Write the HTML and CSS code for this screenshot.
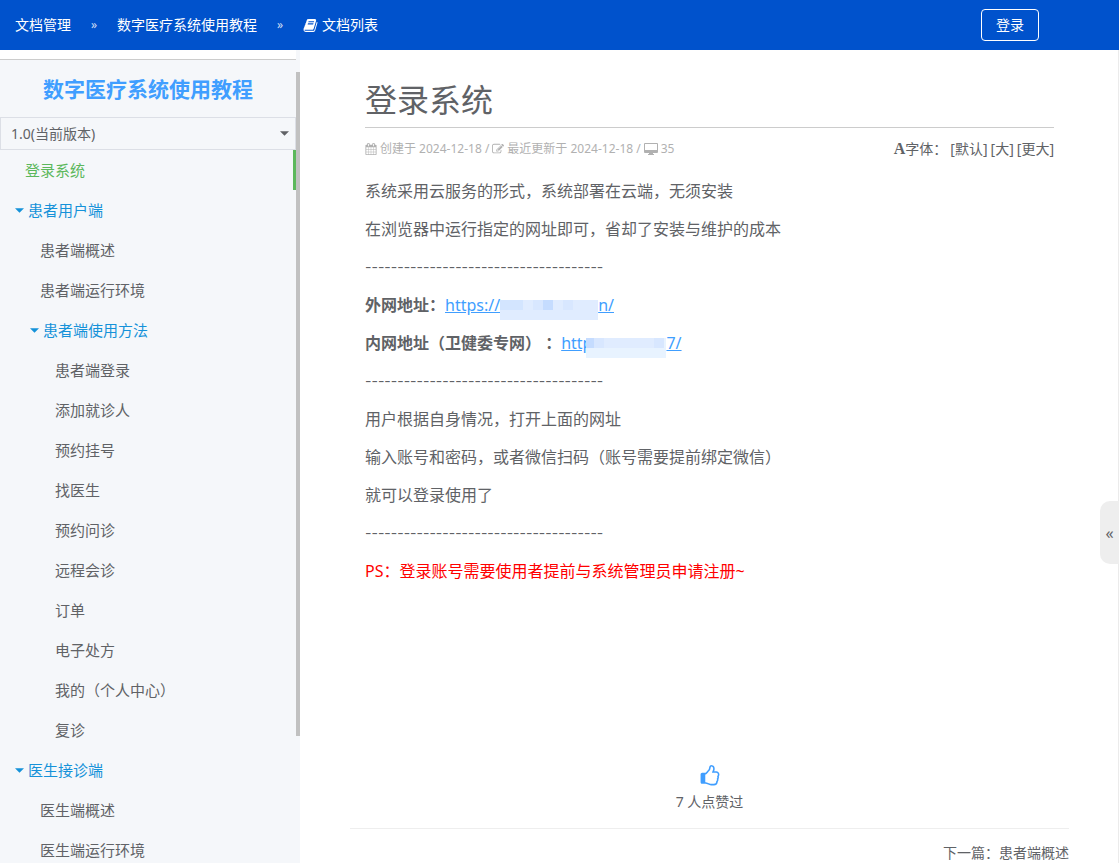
FILE: index.html
```html
<!DOCTYPE html>
<html lang="zh-CN">
<head>
<meta charset="utf-8">
<title>登录系统 - 数字医疗系统使用教程</title>
<link rel="stylesheet" href="styles.css">
</head>
<body>
<header class="topbar">
  <nav class="crumbs" aria-label="导航">
    <a href="#">文档管理</a>
    <span class="sep">»</span>
    <a href="#">数字医疗系统使用教程</a>
    <span class="sep">»</span>
    <a href="#" class="with-icon"><svg class="icon-book" viewBox="0 0 1792 1792" aria-hidden="true"><path d="M1703 478q40 57 18 129l-275 906q-19 64-76.500 107.500t-122.500 43.500h-923q-77 0-148.500-53.500t-99.500-131.500q-24-67-2-127 0-4 3-27t4-37q1-8-3-21.500t-3-19.500q2-11 8-21t16.500-23.500 16.500-23.500q23-38 45-91.500t30-91.500q3-10 .5-30t-.5-28q3-11 17-28t17-23q21-36 42-92t25-90q1-9-2.500-32t.5-28q4-13 22-30.500t22-22.500q19-26 42.500-84.500t27.500-96.500q1-8-3-25.500t-2-26.500q2-8 9-18t18-23 17-21q8-12 16.500-30.500t15-35 16-36 19.500-32 26.500-23.500 36-11.500 47.500 5.500l-1 3q38-9 51-9h761q74 0 114 56t18 130l-274 906q-36 119-71.500 153.500t-128.500 34.500h-869q-27 0-38 15-11 16-1 43 24 70 144 70h923q29 0 56-15.500t35-41.500l300-987q7-22 5-57 38 15 59 43zm-1064 2q-4 13 2 22.500t20 9.500h608q13 0 25.500-9.500t16.500-22.500l21-64q4-13-2-22.500t-20-9.500h-608q-13 0-25.500 9.500t-16.500 22.500zm-83 256q-4 13 2 22.500t20 9.500h608q13 0 25.500-9.500t16.500-22.500l21-64q4-13-2-22.500t-20-9.500h-608q-13 0-25.500 9.500t-16.500 22.500z"/></svg>文档列表</a>
  </nav>
  <button class="login" type="button">登录</button>
</header>
<div class="layout">
  <aside class="sidebar">
    <div class="side-main">
      <h2 class="book-title">数字医疗系统使用教程</h2>
      <div class="version">
        <select aria-label="版本"><option>1.0(当前版本)</option></select>
        <svg class="caret" viewBox="0 0 8 4" aria-hidden="true"><path d="M0 0h8L4 4z"/></svg>
      </div>
      <ul class="tree">
        <li><a class="leaf active" href="#">登录系统</a></li>
        <li><a class="group" href="#"><svg class="caret" viewBox="0 0 8 4" aria-hidden="true"><path d="M0 0h8L4 4z"/></svg>患者用户端</a>
          <ul>
            <li><a class="leaf" href="#">患者端概述</a></li>
            <li><a class="leaf" href="#">患者端运行环境</a></li>
            <li><a class="group" href="#"><svg class="caret" viewBox="0 0 8 4" aria-hidden="true"><path d="M0 0h8L4 4z"/></svg>患者端使用方法</a>
              <ul>
                <li><a class="leaf" href="#">患者端登录</a></li>
                <li><a class="leaf" href="#">添加就诊人</a></li>
                <li><a class="leaf" href="#">预约挂号</a></li>
                <li><a class="leaf" href="#">找医生</a></li>
                <li><a class="leaf" href="#">预约问诊</a></li>
                <li><a class="leaf" href="#">远程会诊</a></li>
                <li><a class="leaf" href="#">订单</a></li>
                <li><a class="leaf" href="#">电子处方</a></li>
                <li><a class="leaf" href="#">我的（个人中心）</a></li>
                <li><a class="leaf" href="#">复诊</a></li>
              </ul>
            </li>
          </ul>
        </li>
        <li><a class="group" href="#"><svg class="caret" viewBox="0 0 8 4" aria-hidden="true"><path d="M0 0h8L4 4z"/></svg>医生接诊端</a>
          <ul>
            <li><a class="leaf" href="#">医生端概述</a></li>
            <li><a class="leaf" href="#">医生端运行环境</a></li>
          </ul>
        </li>
      </ul>
    </div>
    <div class="track"><div class="thumb"></div></div>
  </aside>
  <main class="content">
    <article class="doc">
      <h1>登录系统</h1>
      <div class="info">
        <div class="meta">
          <svg viewBox="0 0 1792 1792" aria-hidden="true"><path d="M192 1664h288v-288h-288v288zm352 0h320v-288h-320v288zm-352-352h288v-320h-288v320zm352 0h320v-320h-320v320zm-352-384h288v-288h-288v288zm736 736h320v-288h-320v288zm-384-736h320v-288h-320v288zm768 736h288v-288h-288v288zm-384-352h320v-320h-320v320zm-352-864v-288q0-13-9.500-22.500t-22.500-9.500h-64q-13 0-22.500 9.500t-9.500 22.500v288q0 13 9.500 22.500t22.500 9.500h64q13 0 22.500-9.500t9.500-22.500zm736 864h288v-320h-288v320zm-384-384h320v-288h-320v288zm384 0h288v-288h-288v288zm32-480v-288q0-13-9.500-22.500t-22.500-9.500h-64q-13 0-22.500 9.500t-9.500 22.500v288q0 13 9.500 22.500t22.500 9.500h64q13 0 22.500-9.500t9.500-22.500zm384-64v1280q0 52-38 90t-90 38h-1408q-52 0-90-38t-38-90v-1280q0-52 38-90t90-38h128v-96q0-66 47-113t113-47h64q66 0 113 47t47 113v96h384v-96q0-66 47-113t113-47h64q66 0 113 47t47 113v96h128q52 0 90 38t38 90z"/></svg>
          <span>创建于 2024-12-18 /</span>
          <svg viewBox="0 0 1792 1792" aria-hidden="true"><path d="M888 1184l116-116-152-152-116 116v56h96v96h56zm440-720q-16-16-33 1l-350 350q-17 17-1 33t33-1l350-350q17-17 1-33zm80 594v190q0 119-84.500 203.500t-203.500 84.500h-832q-119 0-203.500-84.500t-84.500-203.500v-832q0-119 84.500-203.500t203.500-84.500h832q63 0 117 25 15 7 18 23 3 17-9 29l-49 49q-14 14-32 8-23-6-45-6h-832q-66 0-113 47t-47 113v832q0 66 47 113t113 47h832q66 0 113-47t47-113v-126q0-13 9-22l64-64q15-15 35-7t20 29zm-96-738l288 288-672 672h-288v-288zm444 132l-92 92-288-288 92-92q28-28 68-28t68 28l152 152q28 28 28 68t-28 68z"/></svg>
          <span>最近更新于 2024-12-18 /</span>
          <svg class="wide" viewBox="0 0 14 12" aria-hidden="true"><path fill-rule="evenodd" d="M1 0h12q1 0 1 1v8q0 1-1 1H9v1h1v1H4v-1h1v-1H1q-1 0-1-1V1q0-1 1-1zm0 1v6h12V1z"/></svg>
          <span>35</span>
        </div>
        <div class="sizes">
          <span><b class="font-mark">A</b>字体：</span>
          <a href="#">[默认]</a>
          <a href="#">[大]</a>
          <a href="#">[更大]</a>
        </div>
      </div>
      <p>系统采用云服务的形式，系统部署在云端，无须安装</p>
      <p>在浏览器中运行指定的网址即可，省却了安装与维护的成本</p>
      <p class="dashes">-------------------------------------</p>
      <p><strong>外网地址：</strong><a class="url" href="#">https://<span class="mask mask-a"><i></i><i></i><i></i><i></i><i></i><i></i></span>n/</a></p>
      <p><strong>内网地址（卫健委专网）&nbsp;：</strong><a class="url" href="#">http<span class="mask mask-b"><i></i><i></i><i></i><i></i><i></i></span>7/</a></p>
      <p class="dashes">-------------------------------------</p>
      <p>用户根据自身情况，打开上面的网址</p>
      <p>输入账号和密码，或者微信扫码（账号需要提前绑定微信）</p>
      <p>就可以登录使用了</p>
      <p class="dashes">-------------------------------------</p>
      <p class="warn">PS：登录账号需要使用者提前与系统管理员申请注册~</p>
    </article>
    <div class="likes">
      <button type="button" aria-label="点赞"><svg viewBox="0 0 1792 1792" aria-hidden="true"><path d="M1536 768q0-51-39-89.500t-89-38.500h-352q0-58 48-159.500t48-160.500q0-98-32-145t-128-47q-26 26-38 85t-30.500 125.500-59.500 109.500q-22 23-77 91-4 5-23 30t-31.500 41-34.500 42.500-40 44-38.500 35.500-40 27-35.500 9h-32v640h32q13 0 31.500 3t33 6.500 38 11 35 11.500 35.500 12.500 29 10.500q211 73 342 73h121q192 0 192-167 0-26-5-56 30-16 47.500-52.500t17.500-73.500-18-69q53-50 53-119 0-25-10-55.500t-25-47.500q32-1 53.500-47t21.500-81zm128-1q0 89-49 163 9 33 9 69 0 77-38 144 3 21 3 43 0 101-60 178 1 139-85 219.500t-227 80.500h-129q-96 0-189.500-22.500t-216.500-65.500q-116-40-138-40h-288q-53 0-90.500-37.500t-37.500-90.500v-640q0-53 37.500-90.500t90.500-37.500h274q36-24 137-155 58-75 107-128 24-25 35.500-85.500t30.500-126.500 62-108q39-37 90-37 84 0 151 32.500t102 101.500 35 186q0 93-48 192h176q104 0 180 76t76 179z"/></svg></button>
      <span>7 人点赞过</span>
    </div>
    <nav class="pager" aria-label="翻页"><a href="#">下一篇：患者端概述</a></nav>
  </main>
</div>
<button class="drawer" type="button" aria-label="展开">«</button>
</body>
</html>
```
FILE: styles.css
```css
* { box-sizing: border-box; }

body {
  margin: 0;
  height: 100vh;
  display: flex;
  flex-direction: column;
  overflow: hidden;
  font-family: "Noto Sans", "Noto Sans CJK SC", sans-serif;
  font-size: 14px;
  line-height: 20px;
  color: #606266;
  background: #fff;
}

a { color: inherit; text-decoration: none; }
button { font: inherit; cursor: pointer; }
svg { fill: currentColor; flex: none; }

.topbar {
  flex: none;
  height: 50px;
  padding: 0 80px 0 15px;
  display: flex;
  align-items: center;
  justify-content: space-between;
  background: #0052cc;
  color: #fff;
}

.crumbs { display: flex; align-items: center; gap: 18px; }
.sep { font-size: 12px; opacity: .8; width: 10px; text-align: center; }
.with-icon { display: flex; align-items: center; gap: 4px; }
.icon-book { width: 15px; height: 15px; }

.login {
  width: 58px;
  height: 32px;
  padding: 0;
  color: #fff;
  background: transparent;
  border: 1px solid #fff;
  border-radius: 4px;
}

.layout { flex: 1; min-height: 0; display: flex; }

.sidebar { flex: none; width: 300px; display: flex; overflow: hidden; }

.side-main {
  flex: 1;
  margin-top: 9px;
  border-top: 1px solid #ccc;
  background: #f5f7fa;
}

.book-title {
  margin: 0;
  padding: 15px 0 14px;
  text-align: center;
  font-size: 21px;
  line-height: 28px;
  font-weight: 700;
  color: #409eff;
}

.version {
  height: 33px;
  display: flex;
  align-items: center;
  padding-right: 6px;
  border: 1px solid #dcdfe6;
}

.version select {
  flex: 1;
  appearance: none;
  border: 0;
  margin: 0;
  padding: 0 10px;
  background: transparent;
  font: inherit;
  font-size: 14px;
  line-height: 20px;
  color: inherit;
}

.caret { width: 9px; height: 5px; }

.tree, .tree ul { list-style: none; margin: 0; padding: 0; }
.tree ul { padding-left: 15px; }
.tree { font-size: 15px; line-height: 40px; }
.tree a { display: flex; align-items: center; height: 40px; }
.tree .leaf { padding-left: 25px; }
.tree .group { padding-left: 15px; gap: 4px; color: #1592d9; }
.tree .active { color: #5cb85c; border-right: 3px solid #5cb85c; }

.track { flex: none; width: 4px; padding-top: 22px; background: #f5f7fa; }
.thumb { height: 84%; background: #c1c1c1; }

.content {
  flex: 1;
  min-width: 0;
  padding: 0 50px;
  box-shadow: inset -1px 0 #ebebeb;
}

.doc { padding: 30px 15px 0; font-size: 16px; line-height: 22px; }

.doc h1 {
  margin: 0 0 11px;
  padding-bottom: 7px;
  border-bottom: 1px solid #ccc;
  font-size: 32px;
  line-height: 40px;
  font-weight: 400;
}

.info {
  display: flex;
  justify-content: space-between;
  margin-bottom: 21px;
  font-size: 14px;
  line-height: 20px;
}

.meta { display: flex; align-items: center; gap: 3px; font-size: 12px; color: #b1b1b1; }
.meta svg { width: 12px; height: 12px; }
.meta .wide { width: 14px; }
.sizes { display: flex; gap: 3px; }
.font-mark { font-family: "Liberation Serif", serif; font-size: 16px; line-height: 16px; }

.doc p { margin: 0 0 16px; }
.doc .dashes { font-family: Inter, sans-serif; font-size: 14px; }
.url { color: #409eff; text-decoration: underline; }
.warn { color: #f00; }

/* Blurred-out part of an address */
.mask {
  display: inline-grid;
  grid-template-rows: 10px;
  grid-auto-flow: column;
  height: 20px;
  margin: -4px 0 -8px;
  vertical-align: 1px;
  background: #e0ecff;
}
.mask-a { width: 98px; grid-template-columns: 23px 10px 10px 10px 10px 10px; }
.mask-b { width: 80px; margin-left: -6px; grid-template-columns: 8px 10px 30px 20px 10px; background: #e8f3ff; }
.mask i { background: #d8e7ff; }
.mask-a i:nth-child(2), .mask-a i:nth-child(5) { background: #e0ecff; }
.mask-a i:nth-child(1) { background: #d3e5ff; }
.mask-a i:nth-child(4), .mask-b i:nth-child(1) { background: #c5dcff; }
.mask-b i:nth-child(3), .mask-b i:nth-child(4) { background: #e0ecff; }

.likes {
  display: flex;
  flex-direction: column;
  align-items: center;
  gap: 5px;
  padding: 167px 0 16px;
  border-bottom: 1px solid #eee;
}
.likes button { padding: 0; border: 0; background: none; color: #409eff; line-height: 0; }
.likes svg { width: 22px; height: 22px; }

.pager { padding-top: 14px; text-align: right; }

.drawer {
  position: fixed;
  right: 0;
  top: 501px;
  width: 19px;
  height: 63px;
  padding: 0;
  border: 0;
  border-radius: 10px 0 0 10px;
  background: #eee;
  color: #606266;
  font-size: 16px;
}
```
